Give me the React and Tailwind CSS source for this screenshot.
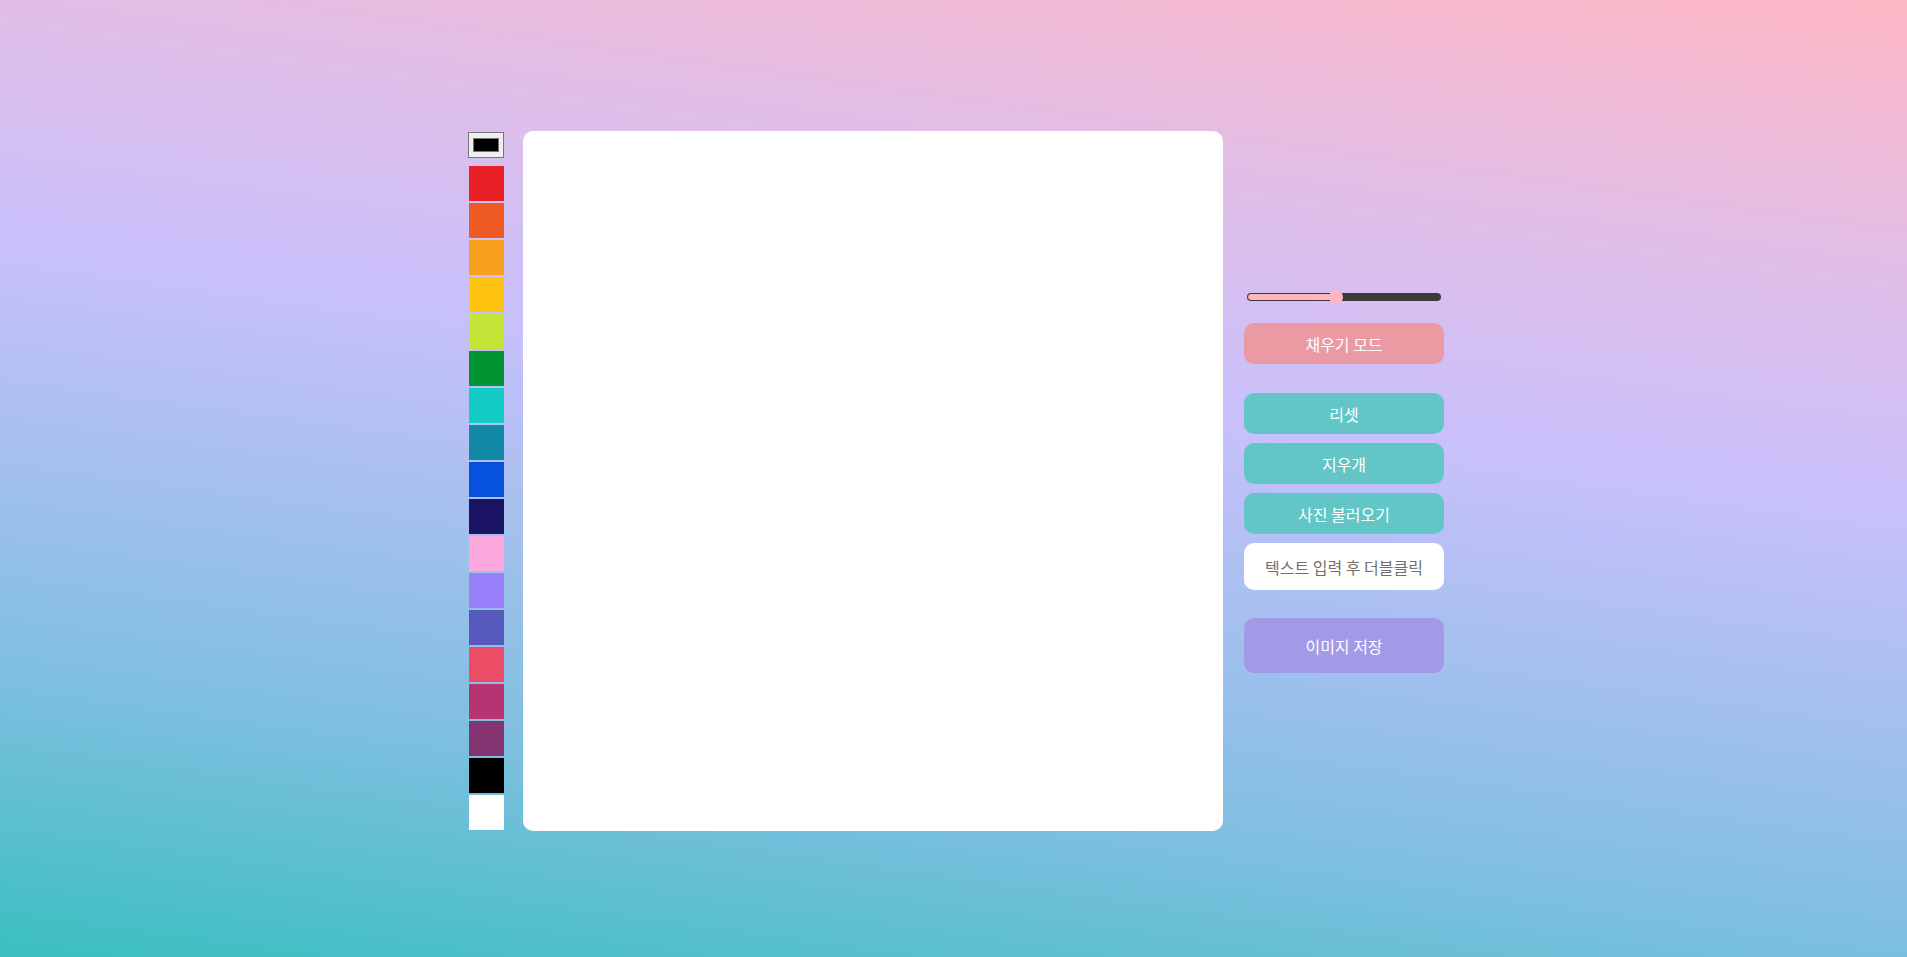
import React from "react";

const swatches = [
  "bg-[#EA2027]",
  "bg-[#EE5A24]",
  "bg-[#F79F1F]",
  "bg-[#FFC312]",
  "bg-[#C4E538]",
  "bg-[#009432]",
  "bg-[#12CBC4]",
  "bg-[#1289A7]",
  "bg-[#0652DD]",
  "bg-[#1B1464]",
  "bg-[#FDA7DF]",
  "bg-[#9980FA]",
  "bg-[#5758BB]",
  "bg-[#ED4C67]",
  "bg-[#B53471]",
  "bg-[#833471]",
  "bg-[#000000]",
  "bg-[#FFFFFF]",
];

function ColorPicker() {
  return (
    <div className="h-[26px] w-[36px] border border-[#767676] bg-[#efefef] px-[4px] pb-[4px] pt-[5px]">
      <div className="h-[14px] w-full border border-[#777777] bg-black" />
    </div>
  );
}

function Slider() {
  return (
    <div className="relative mx-auto flex h-[16px] w-[194px] items-center">
      <div className="flex h-[8px] w-full overflow-hidden rounded-full bg-[#3b3b3b]">
        <div className="h-full w-[90px] rounded-l-full border border-[#3b3b3b] bg-[#ffb6c1]" />
      </div>
      <div className="absolute left-[82px] top-[1px] h-[14px] w-[14px] rounded-full bg-[#ffb6c1]" />
    </div>
  );
}

export default function App() {
  return (
    <div
      className="flex min-h-screen w-full items-center justify-center bg-[linear-gradient(8deg,#3abfc0_0%,#7ebfe0_23%,#c8c0fc_58%,#e0bee8_77%,#ffb8c6_100%)] pl-[5px] pt-[5px]"
      style={{ fontFamily: '"Noto Sans CJK KR", "Noto Sans", sans-serif' }}
    >
      <div className="flex items-center">
        <div className="flex flex-col items-end">
          <ColorPicker />
          <div className="mt-[8px] flex flex-col gap-[2px]">
            {swatches.map((c, i) => (
              <div key={i} className={`h-[35px] w-[35px] ${c}`} />
            ))}
          </div>
        </div>

        <div className="ml-[19px] h-[700px] w-[700px] rounded-[10px] bg-white" />

        <div className="ml-[21px] flex w-[200px] flex-col">
          <Slider />
          <button className="mt-[18px] h-[41px] w-full rounded-[10px] bg-[#eb99a3] text-[16px] text-white">
            채우기 모드
          </button>
          <button className="mt-[29px] h-[41px] w-full rounded-[10px] bg-[#62c6c7] text-[16px] text-white">
            리셋
          </button>
          <button className="mt-[9px] h-[41px] w-full rounded-[10px] bg-[#62c6c7] text-[16px] text-white">
            지우개
          </button>
          <button className="mt-[9px] h-[41px] w-full rounded-[10px] bg-[#62c6c7] text-[16px] text-white">
            사진 불러오기
          </button>
          <input
            type="text"
            placeholder="텍스트 입력 후 더블클릭"
            className="mt-[9px] h-[47px] w-full rounded-[10px] bg-white text-center text-[16px] font-normal text-[#333] outline-none placeholder:text-[#6f6f6f]"
          />
          <button className="mt-[28px] h-[55px] w-full rounded-[10px] bg-[#a29ae6] text-[16px] text-white">
            이미지 저장
          </button>
        </div>
      </div>
    </div>
  );
}
